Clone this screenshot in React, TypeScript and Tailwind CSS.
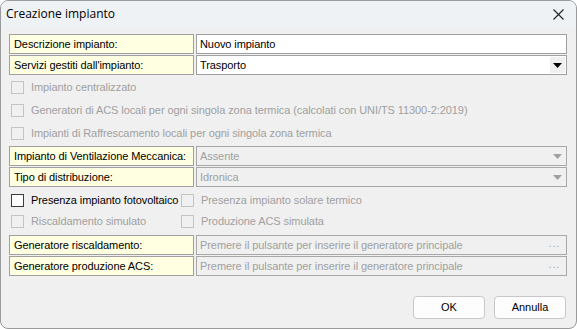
import React from 'react';

const font = { fontFamily: '"Liberation Sans", Arial, sans-serif' };

function Label({ children }: { children: React.ReactNode }) {
  return (
    <div className="w-[185px] h-[20px] shrink-0 border border-[#a0a0a0] bg-[#ffffe1] pl-[4px] flex items-center text-[11px] text-black leading-none tracking-[-0.08px]">
      {children}
    </div>
  );
}

function Arrow({ disabled }: { disabled?: boolean }) {
  return (
    <svg width="9" height="5" viewBox="0 0 9 5" className="shrink-0">
      <path d="M0 0h9L4.5 5z" fill={disabled ? '#a0a0a0' : '#000'} />
    </svg>
  );
}

function Field({
  value,
  disabled,
  combo,
  dots,
}: {
  value: string;
  disabled?: boolean;
  combo?: boolean;
  dots?: boolean;
}) {
  return (
    <div
      className={`flex-1 h-[20px] border flex items-center text-[11px] leading-none tracking-[-0.08px] ${
        disabled ? 'border-[#a8a8a8] bg-[#f0f0f0] text-[#a0a0a0]' : 'border-[#a0a0a0] bg-white text-black'
      }`}
    >
      <span className="flex-1 pl-[3px] truncate">{value}</span>
      {combo && (
        <div className={`w-[15px] h-[16px] mr-[1px] flex items-center justify-center ${disabled ? '' : 'bg-[#f0f0f0]'}`}>
          <Arrow disabled={disabled} />
        </div>
      )}
      {dots && <span className="pr-[6px] text-[#a0a0a0] tracking-[1px] text-[10px] -mt-[3px]">...</span>}
    </div>
  );
}

function Row({ label, children }: { label: string; children: React.ReactNode }) {
  return (
    <div className="flex gap-[2px]">
      <Label>{label}</Label>
      {children}
    </div>
  );
}

function Check({ label, disabled, w }: { label: string; disabled?: boolean; w?: string }) {
  return (
    <div className={`flex items-center gap-[7px] ${w ?? ''}`}>
      <div className={`w-[13px] h-[13px] border ${disabled ? 'border-[#c4c4c4]' : 'border-[#3c3c3c] bg-white'}`} />
      <span className={`text-[11px] leading-none tracking-[-0.08px] ${disabled ? 'text-[#a0a0a0]' : 'text-black'}`}>
        {label}
      </span>
    </div>
  );
}

export default function App() {
  return (
    <div className="w-[577px] h-[329px] bg-white" style={font}>
      <div className="w-full h-full rounded-[8px] border border-[#9a9a9a] bg-[#f0f0f0] overflow-hidden flex flex-col">
        {/* Title bar */}
        <div className="h-[26px] bg-[#eef2f5] flex items-center justify-between pl-[5px] pr-[12px]">
          <span className="text-[12px] text-black" style={{ fontFamily: '"Open Sans", "Noto Sans", sans-serif' }}>
            Creazione impianto
          </span>
          <svg width="11" height="11" viewBox="0 0 11 11">
            <path d="M0.5 0.5L10.5 10.5M10.5 0.5L0.5 10.5" stroke="#222" strokeWidth="1.1" />
          </svg>
        </div>

        <div className="flex-1 pl-[8px] pr-[9px] pt-[7px] flex flex-col">
          <div className="flex flex-col gap-[1px]">
            <Row label="Descrizione impianto:">
              <Field value="Nuovo impianto" />
            </Row>
            <Row label="Servizi gestiti dall'impianto:">
              <Field value="Trasporto" combo />
            </Row>
          </div>

          <div className="flex flex-col gap-[10px] pt-[6px] pl-[2px]">
            <Check label="Impianto centralizzato" disabled />
            <Check
              label="Generatori di ACS locali per ogni singola zona termica (calcolati con UNI/TS 11300-2:2019)"
              disabled
            />
            <Check label="Impianti di Raffrescamento locali per ogni singola zona termica" disabled />
          </div>

          <div className="flex flex-col gap-[1px] pt-[6px]">
            <Row label="Impianto di Ventilazione Meccanica:">
              <Field value="Assente" disabled combo />
            </Row>
            <Row label="Tipo di distribuzione:">
              <Field value="Idronica" disabled combo />
            </Row>
          </div>

          <div className="flex flex-col gap-[8px] pt-[7px] pl-[2px]">
            <div className="flex">
              <Check label="Presenza impianto fotovoltaico" w="w-[170px]" />
              <Check label="Presenza impianto solare termico" disabled />
            </div>
            <div className="flex">
              <Check label="Riscaldamento simulato" disabled w="w-[170px]" />
              <Check label="Produzione ACS simulata" disabled />
            </div>
          </div>

          <div className="flex flex-col gap-[1px] pt-[7px]">
            <Row label="Generatore riscaldamento:">
              <Field value="Premere il pulsante per inserire il generatore principale" disabled dots />
            </Row>
            <Row label="Generatore produzione ACS:">
              <Field value="Premere il pulsante per inserire il generatore principale" disabled dots />
            </Row>
          </div>

          <div className="flex justify-end gap-[9px] pt-[20px] pr-[1px]">
            <button className="w-[72px] h-[23px] rounded-[4px] border border-[#c8c8c8] bg-[#fdfdfd] text-[11px] text-black">
              OK
            </button>
            <button className="w-[72px] h-[23px] rounded-[4px] border border-[#c8c8c8] bg-[#fdfdfd] text-[11px] text-black">
              Annulla
            </button>
          </div>
        </div>
      </div>
    </div>
  );
}
